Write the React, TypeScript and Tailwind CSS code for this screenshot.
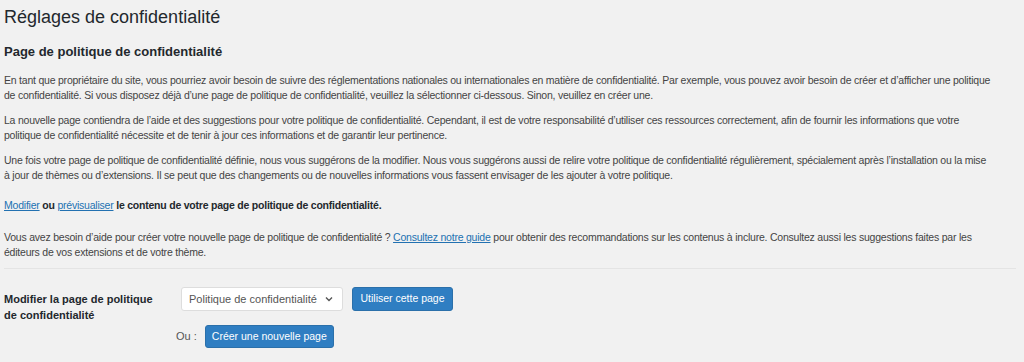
import React from 'react';

const font = { fontFamily: '"Liberation Sans", Arial, sans-serif' };

const Link = ({ children }: { children: React.ReactNode }) => (
  <a href="#" className="text-[#2271b1] underline underline-offset-1 font-normal">{children}</a>
);

export default function App() {
  return (
    <div className="w-[1024px] h-[362px] overflow-hidden bg-[#f1f1f1] text-[#444] pl-[4px] pr-[4px]" style={font}>
      <h1 className="text-[18px] leading-[22px] pt-[6px] text-[#23282d] font-normal">Réglages de confidentialité</h1>
      <h2 className="text-[13px] leading-[18px] font-bold mt-[15px] text-[#23282d]">Page de politique de confidentialité</h2>

      <div className="text-[10.5px] leading-[15px] tracking-[-0.22px]">
        <p className="mt-[12px]">
          En tant que propriétaire du site, vous pourriez avoir besoin de suivre des réglementations nationales ou internationales en matière de confidentialité. Par exemple, vous pouvez avoir besoin de créer et d’afficher une politique<br />
          de confidentialité. Si vous disposez déjà d’une page de politique de confidentialité, veuillez la sélectionner ci-dessous. Sinon, veuillez en créer une.
        </p>
        <p className="mt-[10px]">
          La nouvelle page contiendra de l’aide et des suggestions pour votre politique de confidentialité. Cependant, il est de votre responsabilité d’utiliser ces ressources correctement, afin de fournir les informations que votre<br />
          politique de confidentialité nécessite et de tenir à jour ces informations et de garantir leur pertinence.
        </p>
        <p className="mt-[10px]">
          Une fois votre page de politique de confidentialité définie, nous vous suggérons de la modifier. Nous vous suggérons aussi de relire votre politique de confidentialité régulièrement, spécialement après l’installation ou la mise<br />
          à jour de thèmes ou d’extensions. Il se peut que des changements ou de nouvelles informations vous fassent envisager de les ajouter à votre politique.
        </p>
        <p className="mt-[15px] font-bold text-[#23282d]">
          <Link>Modifier</Link> ou <Link>prévisualiser</Link> le contenu de votre page de politique de confidentialité.
        </p>
        <p className="mt-[17px]">
          Vous avez besoin d’aide pour créer votre nouvelle page de politique de confidentialité ? <Link>Consultez notre guide</Link> pour obtenir des recommandations sur les contenus à inclure. Consultez aussi les suggestions faites par les<br />
          éditeurs de vos extensions et de votre thème.
        </p>
      </div>

      <hr className="mt-[8px] border-0 border-t border-[#e4e4e4] mr-1" />

      <div className="flex mt-[18px]">
        <div className="w-[177px] pr-[20px] pt-[4px] text-[11px] leading-[16px] font-bold text-[#23282d]">
          Modifier la page de politique de confidentialité
        </div>
        <div className="flex flex-col">
          <div className="flex items-center gap-[9px]">
            <div className="flex items-center justify-between w-[162px] h-[24px] bg-white border border-[#dddddd] rounded-[3px] pl-[7px] pr-[8px] text-[11px] text-[#555]">
              <span>Politique de confidentialité</span>
              <svg width="10" height="10" viewBox="0 0 10 10" fill="none" stroke="#555" strokeWidth="1.4"><path d="M2 3.5l3 3 3-3" /></svg>
            </div>
            <button className="h-[24px] w-[101px] bg-[#2f7ec2] text-white text-[10.5px] rounded-[3px] border border-[#2b70aa]">Utiliser cette page</button>
          </div>
          <div className="flex items-center gap-[8px] mt-[14px] -ml-[5px]">
            <span className="text-[11px] text-[#555]">Ou :</span>
            <button className="h-[23px] w-[129px] bg-[#2f7ec2] text-white text-[10.5px] rounded-[3px] border border-[#2b70aa]">Créer une nouvelle page</button>
          </div>
        </div>
      </div>
    </div>
  );
}
